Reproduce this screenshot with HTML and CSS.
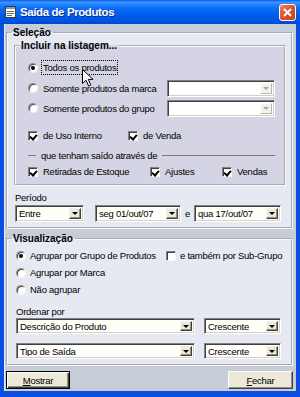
FILE: index.html
```html
<!DOCTYPE html>
<html lang="pt">
<head>
    <meta charset="UTF-8">
    <title>Saída de Produtos</title>
    <link rel="stylesheet" href="styles.css">
</head>
<body>
    <div class="window">
        <div class="titlebar">
            <svg class="app-icon" width="11" height="12" viewBox="0 0 11 12">
                <rect x="0.5" y="0.5" width="10" height="11" fill="#fff" stroke="#3c3c3c"/>
                <rect x="1" y="1" width="9" height="2" fill="#7d96c8"/>
                <path d="M2 5.5h7M2 7.5h7M2 9.5h5" stroke="#6d6d6d"/>
            </svg>
            <span class="title">Saída de Produtos</span>
            <div class="close">
                <svg width="15" height="15" viewBox="0 0 15 15">
                    <path d="M4 4l7 7M11 4l-7 7" stroke="#fff" stroke-width="2"/>
                </svg>
            </div>
        </div>

        <div class="client">
            <fieldset class="group sel">
                <legend>Seleção</legend>

                <fieldset class="group inner">
                    <legend>Incluir na listagem...</legend>
                    <div class="inner-body">
                        <div class="row r1">
                            <span class="opt"><span class="rb on"></span><span class="focus">Todos os produtos</span></span>
                        </div>
                        <div class="row">
                            <span class="opt"><span class="rb"></span>Somente produtos da marca</span>
                            <div class="combo dis w-side"><span class="val"></span><span class="arrow"></span></div>
                        </div>
                        <div class="row">
                            <span class="opt"><span class="rb"></span>Somente produtos do grupo</span>
                            <div class="combo dis w-side"><span class="val"></span><span class="arrow"></span></div>
                        </div>
                        <div class="row checks1">
                            <span class="opt w100"><span class="cb on"></span>de Uso Interno</span>
                            <span class="opt"><span class="cb on"></span>de Venda</span>
                        </div>
                        <div class="row sep">
                            <span class="dash"></span>
                            <span class="sep-text">que tenham saído através de</span>
                            <span class="line"></span>
                        </div>
                        <div class="row checks2">
                            <span class="opt w122"><span class="cb on"></span>Retiradas de Estoque</span>
                            <span class="opt w72"><span class="cb on"></span>Ajustes</span>
                            <span class="opt"><span class="cb on"></span>Vendas</span>
                        </div>
                    </div>
                </fieldset>

                <div class="periodo">
                    <div class="lbl">Período</div>
                    <div class="prow">
                        <div class="combo w-entre"><span class="val">Entre</span><span class="arrow"></span></div>
                        <div class="combo w-date"><span class="val">seg 01/out/07</span><span class="arrow"></span></div>
                        <span class="e">e</span>
                        <div class="combo w-date2"><span class="val">qua 17/out/07</span><span class="arrow"></span></div>
                    </div>
                </div>
            </fieldset>

            <fieldset class="group vis">
                <legend>Visualização</legend>
                <div class="vis-body">
                    <div class="vrow">
                        <span class="opt w150"><span class="rb on"></span>Agrupar por Grupo de Produtos</span>
                        <span class="opt"><span class="cb"></span>e também por Sub-Grupo</span>
                    </div>
                    <div class="vrow">
                        <span class="opt"><span class="rb"></span>Agrupar por Marca</span>
                    </div>
                    <div class="vrow">
                        <span class="opt"><span class="rb"></span>Não agrupar</span>
                    </div>
                    <div class="lbl ordenar">Ordenar por</div>
                    <div class="orow">
                        <div class="combo w-ord"><span class="val">Descrição do Produto</span><span class="arrow"></span></div>
                        <div class="combo w-dir"><span class="val">Crescente</span><span class="arrow"></span></div>
                    </div>
                    <div class="orow second">
                        <div class="combo w-ord"><span class="val">Tipo de Saída</span><span class="arrow"></span></div>
                        <div class="combo w-dir"><span class="val">Crescente</span><span class="arrow"></span></div>
                    </div>
                </div>
            </fieldset>

            <div class="buttons">
                <button class="btn default"><u>M</u>ostrar</button>
                <button class="btn"><u>F</u>echar</button>
            </div>
        </div>

        <svg class="cursor" width="12" height="18" viewBox="0 0 12 18">
            <path d="M0.5 0.5v14l3.5-3.3 2.6 5.8 2.2-1-2.5-5.6h4.8z" fill="#fff" stroke="#000"/>
        </svg>
    </div>
</body>
</html>
```

FILE: styles.css
```css
* {
    box-sizing: border-box;
}
body {
    margin: 0;
    font-family: "Liberation Sans", Arial, sans-serif;
    font-size: 9.5px;
    letter-spacing: -0.25px;
    color: #000;
}
.window {
    position: relative;
    width: 300px;
    height: 397px;
    display: flex;
    flex-direction: column;
    background: #0a4fe0;
}
.titlebar {
    height: 24px;
    display: flex;
    align-items: center;
    padding-left: 5px;
    background: linear-gradient(to bottom, #0a5ce8 0%, #3d95ff 10%, #1c80ff 20%, #0869f6 40%, #005be9 65%, #0055e3 85%, #0048cf 100%);
}
.app-icon {
    margin-right: 4px;
}
.title {
    color: #fff;
    font-weight: bold;
    font-size: 11.5px;
    letter-spacing: -0.4px;
    text-shadow: 1px 1px 0 #0a2d8e;
}
.close {
    margin-left: auto;
    margin-right: 4px;
    width: 17px;
    height: 17px;
    border: 1px solid #fff;
    border-radius: 3px;
    background: linear-gradient(135deg, #ec8464 0%, #e0552f 45%, #c8401c 100%);
    display: flex;
    align-items: center;
    justify-content: center;
}
.client {
    flex: 1;
    margin: 0 4px 6px 4px;
    padding-top: 4px;
    background: #c7cdd7;
    border-left: 1px solid #e8ecf4;
}

/* group boxes */
.group {
    margin: 0;
    padding: 0;
    min-width: 0;
    border: 2px groove #fbfbff;
}
.group > legend {
    margin-left: 3px;
    padding: 0 2px;
    font-weight: bold;
    font-size: 10px;
    line-height: 10px;
    letter-spacing: 0;
}
.sel {
    margin: 0 3px 0 1px;
    padding-bottom: 5px;
    background: #e6e8f2;
}
.inner {
    margin: 3px 5px 0 6px;
    background: #d4d4e5;
}
.inner-body {
    padding: 6px 9px 7px 12px;
}
.vis {
    margin: 5px 3px 0 1px;
    padding-bottom: 5px;
    background: #e7e9f2;
}
.vis-body {
    padding: 3px 0 0 8px;
}

/* rows */
.row {
    display: flex;
    align-items: center;
    height: 20px;
}
.r1 {
    height: 21px;
}
.checks1 {
    margin-top: 8px;
    height: 19px;
}
.sep {
    height: 21px;
}
.checks2 {
    height: 11px;
}
.opt {
    display: flex;
    align-items: center;
    gap: 5px;
    white-space: nowrap;
}
.w100 { width: 100px; }
.w122 { width: 122px; }
.w72 { width: 72px; }
.w150 { width: 150px; }
.focus {
    outline: 1px dotted #000;
    outline-offset: 1px;
    line-height: 11px;
}
.dash {
    width: 8px;
    border-top: 1px solid #7c7c7c;
}
.sep-text {
    margin: 0 5px;
}
.line {
    flex: 1;
    border-top: 1px solid #7c7c7c;
    margin-right: 0;
}

/* radio and check */
.rb {
    position: relative;
    flex: none;
    width: 10px;
    height: 10px;
    border-radius: 50%;
    background: #fff;
    border: 1px solid;
    border-color: #8c8c8c #f5f5f5 #f5f5f5 #8c8c8c;
    box-shadow: inset 1px 1px 0 #4a4a4a;
}
.rb.on::after {
    content: "";
    position: absolute;
    left: 2px;
    top: 2px;
    width: 4px;
    height: 4px;
    border-radius: 50%;
    background: #000;
}
.cb {
    position: relative;
    flex: none;
    width: 10px;
    height: 10px;
    background: #fff;
    border: 1px solid;
    border-color: #808080 #f5f5f5 #f5f5f5 #808080;
    box-shadow: inset 1px 1px 0 #404040;
}
.cb.on::after {
    content: "";
    position: absolute;
    left: 2px;
    top: 1px;
    width: 3px;
    height: 5px;
    border: solid #000;
    border-width: 0 2px 2px 0;
    transform: rotate(40deg);
}

/* combos */
.combo {
    display: flex;
    height: 17px;
    padding: 2px;
    background: #fffffa;
    border: 1px solid;
    border-color: #808080 #fff #fff #808080;
    box-shadow: inset 1px 1px 0 #404040, inset -1px -1px 0 #d4d0c8;
}
.combo .val {
    flex: 1;
    padding-left: 1px;
    line-height: 11px;
    white-space: nowrap;
    overflow: hidden;
}
.combo .arrow {
    width: 12px;
    display: flex;
    align-items: center;
    justify-content: center;
    background: #ece9d8;
    border: 1px solid;
    border-color: #f4f3ee #404040 #404040 #f4f3ee;
    box-shadow: inset -1px -1px 0 #8e8d86;
}
.combo .arrow::before {
    content: "";
    border-left: 3px solid transparent;
    border-right: 3px solid transparent;
    border-top: 3px solid #000;
}
.combo.dis {
    background: #fff;
}
.combo.dis .arrow {
    background: #f3f3ee;
    border-color: #fff #b8b8b0 #b8b8b0 #fff;
    box-shadow: none;
}
.combo.dis .arrow::before {
    border-top-color: #a4a4a4;
}
.w-side {
    width: 108px;
    margin-left: auto;
}
.w-entre {
    width: 69px;
    margin-right: 11px;
}
.w-date {
    width: 86px;
}
.w-date2 {
    width: 87px;
}
.e {
    width: 13px;
    text-align: center;
}
.w-ord {
    width: 179px;
    height: 16px;
}
.w-dir {
    width: 77px;
    height: 16px;
    margin-left: 9px;
}

/* periodo / ordenar */
.periodo {
    margin: 7px 0 0 7px;
}
.lbl {
    height: 10px;
    line-height: 10px;
}
.prow {
    display: flex;
    align-items: center;
    margin-top: 2px;
}
.vrow {
    display: flex;
    align-items: center;
    height: 17px;
}
.vrow .opt {
    gap: 4px;
}
.ordenar {
    margin-top: 9px;
}
.orow {
    display: flex;
    margin-top: 1px;
}
.orow.second {
    margin-top: 9px;
}

/* buttons */
.buttons {
    display: flex;
    justify-content: space-between;
    margin: 5px 3px 0 1px;
}
.btn {
    width: 65px;
    height: 18px;
    padding: 0;
    font: inherit;
    letter-spacing: -0.25px;
    background: #ece9d8;
    border: 1px solid;
    border-color: #fff #404040 #404040 #fff;
    box-shadow: inset -1px -1px 0 #8e8d86;
}
.btn.default {
    width: 64px;
    border-color: #000;
    box-shadow: inset 1px 1px 0 #fff, inset -1px -1px 0 #404040, inset -2px -2px 0 #8e8d86;
}

.cursor {
    position: absolute;
    left: 82px;
    top: 69px;
}
```
